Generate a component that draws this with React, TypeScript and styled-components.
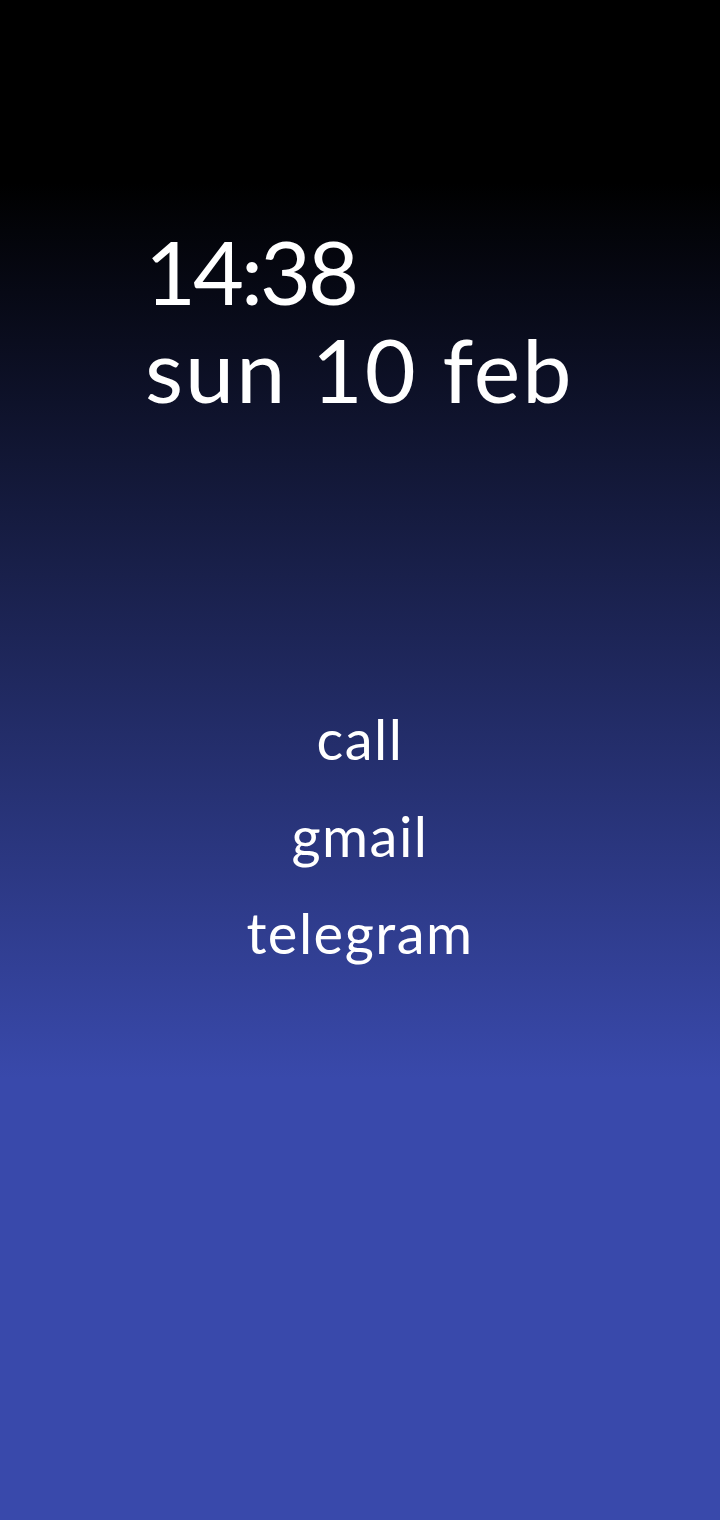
import React from "react";
import styled, { createGlobalStyle } from "styled-components";

const GlobalStyle = createGlobalStyle`
  html, body {
    margin: 0;
    padding: 0;
  }
  body {
    font-family: "Lato", "Noto Sans", sans-serif;
    color: #ffffff;
  }
`;

const Screen = styled.div`
  width: 720px;
  height: 1520px;
  box-sizing: border-box;
  padding-top: 222px;
  display: flex;
  flex-direction: column;
  background: linear-gradient(to bottom, #000000 12%, #3949ab 71%, #3949ab 100%);
`;

const Clock = styled.div`
  padding-left: 145px;
  display: flex;
  flex-direction: column;
`;

const ClockLine = styled.div<{ $tracking: number }>`
  font-size: 88px;
  line-height: 98px;
  font-weight: 400;
  letter-spacing: ${(p) => p.$tracking}px;
  white-space: nowrap;
`;

const Launcher = styled.nav`
  margin-top: 272px;
  display: flex;
  flex-direction: column;
  align-items: center;
`;

const AppLink = styled.a`
  font-size: 56px;
  line-height: 97px;
  font-weight: 400;
  letter-spacing: 1.5px;
  color: #ffffff;
  text-decoration: none;
`;

const apps = ["call", "gmail", "telegram"];

export default function App() {
  return (
    <>
      <GlobalStyle />
      <Screen>
        <Clock>
          <ClockLine $tracking={-3}>14:38</ClockLine>
          <ClockLine $tracking={2}>sun 10 feb</ClockLine>
        </Clock>
        <Launcher>
          {apps.map((name) => (
            <AppLink key={name}>{name}</AppLink>
          ))}
        </Launcher>
      </Screen>
    </>
  );
}
